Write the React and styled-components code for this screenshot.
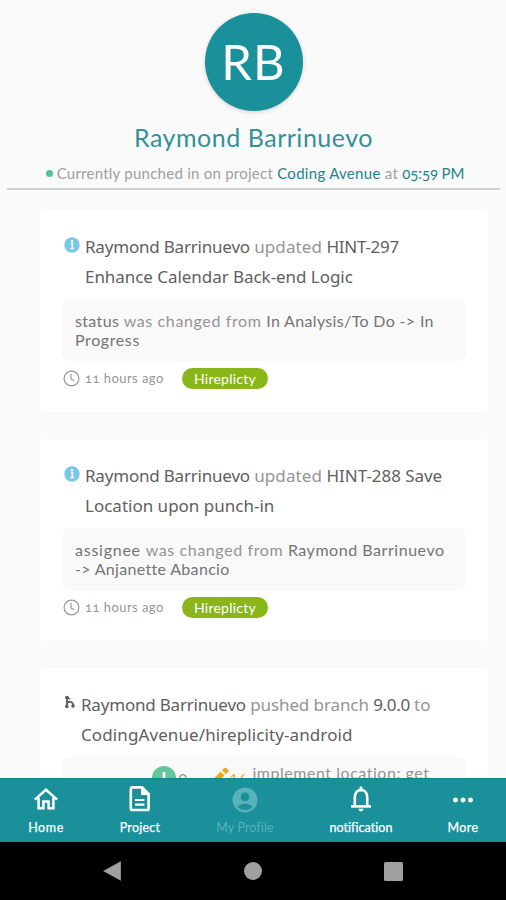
import React from 'react';
import styled, { createGlobalStyle } from 'styled-components';
import { MdAccountCircle, MdMoreHoriz } from 'react-icons/md';

const GlobalStyle = createGlobalStyle`
  * { box-sizing: border-box; }
  body { margin: 0; background: #fafafa; }
`;

const Screen = styled.div`
  display: flex;
  flex-direction: column;
  width: 506px;
  height: 900px;
  overflow: hidden;
  background: #fafafa;
  font-family: Lato, sans-serif;
`;

const Run = styled.span`
  white-space: nowrap;
  letter-spacing: ${({ $track = 0 }) => $track}px;
`;

const Header = styled.header`
  flex: none;
  display: flex;
  flex-direction: column;
  align-items: center;
  height: 190px;
  margin: 0 6px 0 7px;
  padding-top: 13px;
  border-bottom: 2px solid #cdd1cf;
`;

const Avatar = styled.div`
  display: grid;
  place-items: center;
  width: 98px;
  height: 98px;
  border-radius: 50%;
  background: #19909a;
  box-shadow: 0 1px 4px rgba(0, 0, 0, 0.18);
  color: #fff;
  font-size: 49px;
  line-height: 96px;
`;

const Initials = styled(Run)`
  height: 98px;
`;

const Name = styled.h1`
  margin: 10px 0 0;
  color: #32919a;
  font-size: 25px;
  font-weight: 400;
  line-height: 32px;
`;

const Status = styled.div`
  display: flex;
  align-items: center;
  gap: 4px;
  margin: 10px 0 0 3px;
  color: #9da1a1;
  font-size: 15px;
  line-height: 20px;
  font-variant-numeric: oldstyle-nums;
`;

const Dot = styled.span`
  width: 7px;
  height: 7px;
  border-radius: 50%;
  background: #4fc597;
`;

const Accent = styled(Run)`
  color: #23828b;
`;

const Feed = styled.main`
  flex: 1;
  min-height: 0;
  overflow: hidden;
  display: flex;
  flex-direction: column;
  gap: 27px;
  padding: 20px 18.5px 0 39.5px;
`;

const Card = styled.article`
  flex: none;
  height: 202px;
  padding: 22px 23px 0;
  border-radius: 4px;
  background: #fff;
  box-shadow: 0 0 2px rgba(0, 0, 0, 0.04);
`;

const Heading = styled.div`
  display: flex;
  gap: ${({ $gap = 5.5 }) => $gap}px;
  padding-left: 1px;
  font-family: 'Noto Sans', sans-serif;
  font-size: 17px;
  line-height: 30px;
  color: #606060;
`;

const HeadingIcon = styled.span`
  flex: none;
  display: flex;
  width: ${({ $width = 16 }) => $width}px;
  padding-top: ${({ $drop = 5 }) => $drop}px;
  align-items: flex-start;
`;

const Muted = styled(Run)`
  color: #949494;
`;

const Detail = styled.div`
  height: 62px;
  margin-top: 7px;
  padding: 12px 12px 0 12.5px;
  border-radius: 8px;
  background: #f9f9f9;
  box-shadow: inset 0 0 1px rgba(0, 0, 0, 0.08);
  color: #747474;
  font-size: 16px;
  line-height: 19px;
`;

const Footer = styled.div`
  display: flex;
  align-items: center;
  margin-top: 7px;
  padding-left: 0.5px;
  color: #969696;
  font-size: 13px;
  line-height: 21px;
  font-variant-numeric: oldstyle-nums;
`;

const Time = styled(Run)`
  width: 97px;
  margin-left: 5px;
`;

const Badge = styled.span`
  display: flex;
  justify-content: center;
  width: 86px;
  height: 21px;
  border-radius: 11px;
  background: #8ab61a;
  color: #fff;
  font-size: 14px;
  line-height: 21px;
`;

const CommitDetail = styled(Detail)`
  display: grid;
  grid-template-columns: 77px 27px 33px 18px 23px auto;
  padding: 6px 12px 0;
  align-items: start;
`;

const Lowered = styled.span`
  display: flex;
  padding-top: ${({ $by = 3 }) => $by}px;
`;

const Hash = styled.span`
  padding: 11px 0 0 11px;
  color: #23878f;
  font-size: 14px;
`;

const CommitCount = styled.span`
  padding-top: 7px;
  color: ${({ $color }) => $color};
  font-size: 15px;
`;

const TabBar = styled.nav`
  flex: none;
  display: grid;
  grid-template-columns: 92px 96px 114px 118px 86px;
  height: 64px;
  background: #19909a;
  border-top: 1px solid #0f878f;
`;

const Tab = styled.div`
  display: flex;
  flex-direction: column;
  align-items: center;
  padding-top: 6px;
  color: ${({ $dim }) => ($dim ? '#59b2ba' : '#fff')};
  font-size: 12.5px;
  line-height: 18px;
`;

const TabIcon = styled.span`
  display: grid;
  place-items: center;
  height: 28px;
  margin-bottom: 6px;
`;

const TabLabel = styled(Run)`
  -webkit-text-stroke: ${({ $dim }) => ($dim ? 0 : 0.25)}px #fff;
`;

const SystemBar = styled.footer`
  flex: none;
  display: grid;
  grid-template-columns: repeat(3, 140px);
  justify-content: center;
  place-items: center;
  height: 58px;
  background: #000;
`;

const InfoIcon = () => (
  <svg width="16" height="16" viewBox="0 0 16 16">
    <circle cx="8" cy="8" r="7.7" fill="#78c8e8" />
    <circle cx="8" cy="4.3" r="1.2" fill="#fff" />
    <path d="M6.8 6.7H8.4V11M6.5 11.6H9.8" fill="none" stroke="#fff" strokeWidth="1.5" />
  </svg>
);

const ClockIcon = () => (
  <svg width="17" height="17" viewBox="0 0 17 17" fill="none" stroke="#999" strokeWidth="1.2">
    <circle cx="8.5" cy="8.5" r="7.4" />
    <path d="M8 3.8V9L11.3 10.8" />
  </svg>
);

const BranchIcon = () => (
  <svg width="12" height="14" viewBox="0 0 12 14" fill="none" stroke="#5c5c5c" strokeWidth="1.8">
    <path d="M3 2.5V12M3 8.2C4.5 6.2 8.8 5.8 9 10" />
    <circle cx="3" cy="2.6" r="1" />
    <circle cx="2.8" cy="11.4" r="0.9" />
    <circle cx="9" cy="11" r="0.9" />
    <path d="M3 2.2L6.2 4.2" strokeWidth="1.3" />
  </svg>
);

const AddedIcon = () => (
  <svg width="24" height="24" viewBox="0 0 24 24">
    <circle cx="12" cy="12" r="12" fill="#63c79c" />
    <path d="M12 6V17M7.5 13.5L12 18L16.5 13.5" fill="none" stroke="#fff" strokeWidth="2.8" />
  </svg>
);

const PencilIcon = () => (
  <svg width="17" height="17" viewBox="0 0 18 18" fill="#efa91f">
    <path d="M10.6 3.4L13 1Q14 .2 15 1L17.2 3.2Q18 4.1 17.2 5L14.8 7.6Z" />
    <path d="M9.2 4.8L13.4 9L5 17.4H.6V13.4Z" />
  </svg>
);

const HomeIcon = () => (
  <svg width="24" height="22" viewBox="0 0 24 22" fill="none" stroke="#fff" strokeWidth="2.5">
    <path d="M.9 11.6L12 1.7L23.1 11.6" />
    <path d="M4.6 9.4V20.2H9.4V13.4H14.6V20.2H19.4V9.4" />
  </svg>
);

const DocumentIcon = () => (
  <svg width="22" height="26" viewBox="0 0 22 26" fill="none" stroke="#fff" strokeWidth="2.6">
    <path d="M3.4 1.4H13.2L19.6 7.8V22.4Q19.6 24 18 24H3.4Q1.8 24 1.8 22.4V3Q1.8 1.4 3.4 1.4Z" strokeLinejoin="round" />
    <path d="M12.6 2V8.6H19Z" fill="#fff" strokeWidth="1" />
    <path d="M6 14H15.4M6 18.6H15.4" strokeWidth="2.1" />
  </svg>
);

const BellIcon = () => (
  <svg width="22" height="26" viewBox="0 0 22 26" fill="none" stroke="#fff" strokeWidth="2.6">
    <path d="M4.8 20V11.2C4.8 7 7.2 4 11 4S17.2 7 17.2 11.2V20" />
    <path d="M1 20.4H21" strokeWidth="2.6" />
    <path d="M11 1.8V4" strokeWidth="3" strokeLinecap="round" />
    <path d="M8.4 22.8H13.6Q13 25.4 11 25.4T8.4 22.8Z" fill="#fff" stroke="none" />
  </svg>
);

const BackIcon = () => (
  <svg width="20" height="20" viewBox="0 0 20 20">
    <path d="M17.9 .2V19.8L.1 10Z" fill="#a0a0a0" />
  </svg>
);

const HomeDot = styled.span`
  width: 18px;
  height: 18px;
  border-radius: 50%;
  background: #a0a0a0;
`;

const RecentSquare = styled.span`
  width: 19px;
  height: 19px;
  border-radius: 1.5px;
  background: #a0a0a0;
`;

const UpdateCard = ({ title, detail }) => (
  <Card>
    <Heading>
      <HeadingIcon><InfoIcon /></HeadingIcon>
      <div>{title}</div>
    </Heading>
    <Detail>{detail}</Detail>
    <Footer>
      <ClockIcon />
      <Time $track={0.45}>11 hours ago</Time>
      <Badge><Run $track={0.25}>Hireplicty</Run></Badge>
    </Footer>
  </Card>
);

const tabs = [
  { label: 'Home', icon: <HomeIcon />, track: 0.6 },
  { label: 'Project', icon: <DocumentIcon />, track: 0.25 },
  { label: 'My Profile', icon: <MdAccountCircle size={30} />, track: 0.1, dim: true },
  { label: 'notification', icon: <BellIcon />, track: 0.05 },
  { label: 'More', icon: <MdMoreHoriz size={30} />, track: 0.4 },
];

export default function App() {
  return (
    <Screen>
      <GlobalStyle />
      <Header>
        <Avatar><Initials $track={1}>RB</Initials></Avatar>
        <Name><Run $track={0.52}>Raymond Barrinuevo</Run></Name>
        <Status>
          <Dot />
          <span>
            <Run $track={0.25}>Currently punched in on project </Run>
            <Accent $track={0.3}>Coding Avenue</Accent>
            <Run $track={0.3}> at </Run>
            <Accent $track={-0.1}>05:59 PM</Accent>
          </span>
        </Status>
      </Header>
      <Feed>
        <UpdateCard
          title={<>
            <Run $track={-0.2}>Raymond Barrinuevo </Run>
            <Muted $track={0.1}>updated </Muted>
            <Run $track={-0.3}>HINT-297</Run>
            <br />
            <Run $track={-0.05}>Enhance Calendar Back-end Logic</Run>
          </>}
          detail={<>
            <Run $track={0.35}>status </Run>
            <Muted $track={0.62}>was changed from </Muted>
            <Run $track={0.34}>In Analysis/To Do -&gt; In</Run>
            <br />
            <Run $track={0.6}>Progress</Run>
          </>}
        />
        <UpdateCard
          title={<>
            <Run $track={-0.2}>Raymond Barrinuevo </Run>
            <Muted $track={0.1}>updated </Muted>
            <Run $track={-0.05}>HINT-288 Save</Run>
            <br />
            <Run>Location upon punch-in</Run>
          </>}
          detail={<>
            <Run $track={0.75}>assignee </Run>
            <Muted $track={0.6}>was changed from </Muted>
            <Run $track={0.54}>Raymond Barrinuevo</Run>
            <br />
            <Run $track={0.32}>-&gt; Anjanette Abancio</Run>
          </>}
        />
        <Card>
          <Heading $gap={5.5}>
            <HeadingIcon $width={12} $drop={5}><BranchIcon /></HeadingIcon>
            <div>
              <Run $track={-0.2}>Raymond Barrinuevo </Run>
              <Muted $track={-0.1}>pushed branch </Muted>
              <Run $track={-0.3}>9.0.0 </Run>
              <Muted>to</Muted>
              <br />
              <Run $track={0.1}>CodingAvenue/hireplicity-android</Run>
            </div>
          </Heading>
          <CommitDetail>
            <Hash>a9c04</Hash>
            <Lowered><AddedIcon /></Lowered>
            <CommitCount $color="#9a9a9a">0</CommitCount>
            <Lowered $by={4}><PencilIcon /></Lowered>
            <CommitCount $color="#efa91f">16</CommitCount>
            <Muted $track={0.53}>implement location: get</Muted>
          </CommitDetail>
        </Card>
      </Feed>
      <TabBar>
        {tabs.map(({ label, icon, track, dim }) => (
          <Tab key={label} $dim={dim}>
            <TabIcon>{icon}</TabIcon>
            <TabLabel $track={track} $dim={dim}>{label}</TabLabel>
          </Tab>
        ))}
      </TabBar>
      <SystemBar>
        <BackIcon />
        <HomeDot />
        <RecentSquare />
      </SystemBar>
    </Screen>
  );
}
